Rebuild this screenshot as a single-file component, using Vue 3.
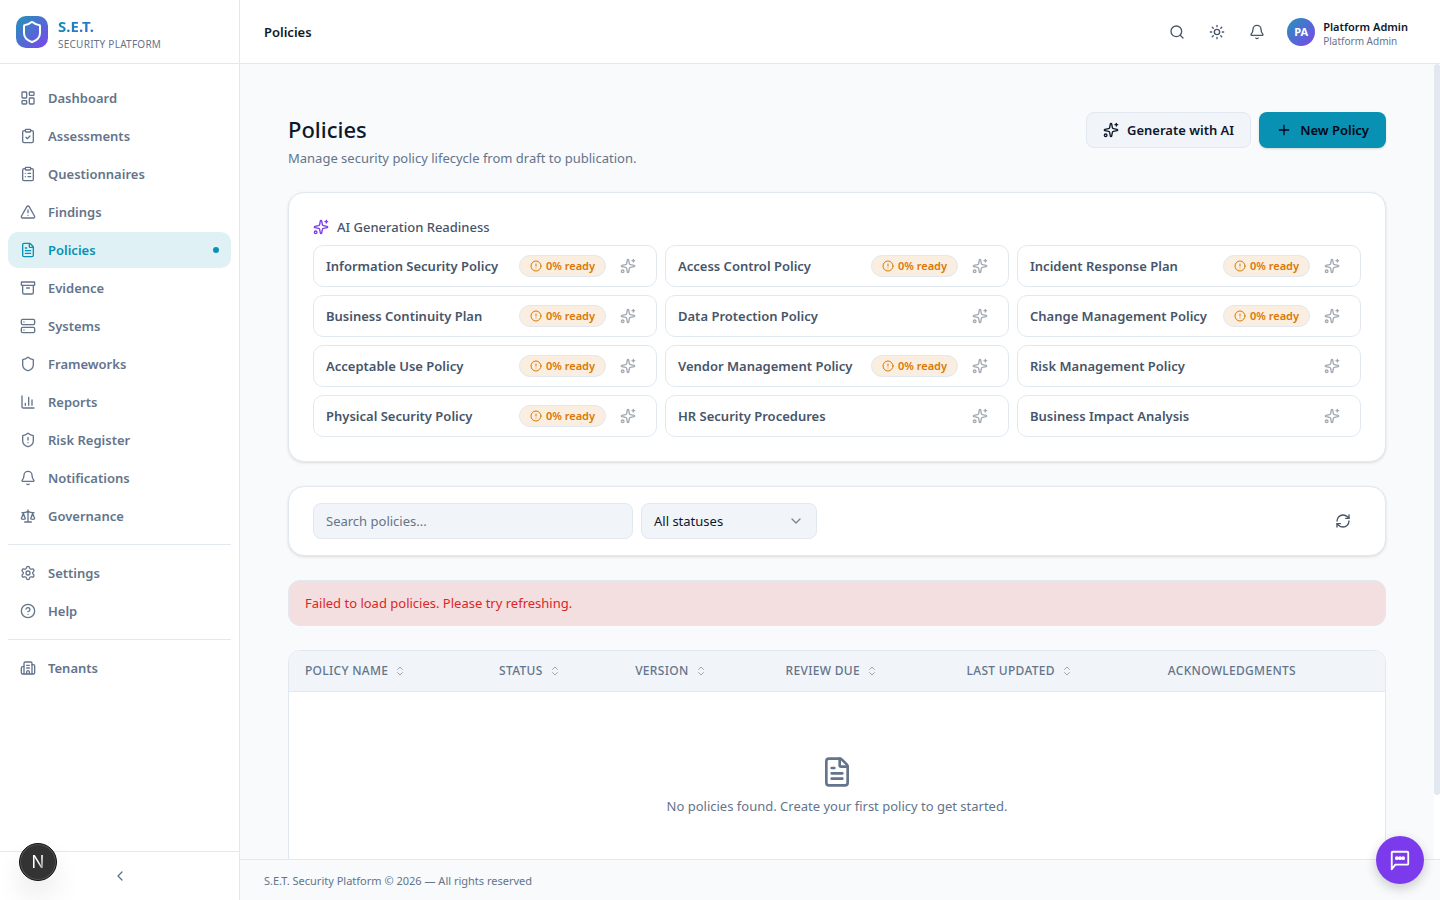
<script setup>
import { ref, onMounted, onBeforeUnmount } from "vue";

const icons = {
  dashboard:
    '<rect width="7" height="9" x="3" y="3" rx="1"/><rect width="7" height="5" x="14" y="3" rx="1"/><rect width="7" height="9" x="14" y="12" rx="1"/><rect width="7" height="5" x="3" y="16" rx="1"/>',
  clipboardCheck:
    '<rect width="8" height="4" x="8" y="2" rx="1"/><path d="M16 4h2a2 2 0 0 1 2 2v14a2 2 0 0 1-2 2H6a2 2 0 0 1-2-2V6a2 2 0 0 1 2-2h2"/><path d="m9 14 2 2 4-4"/>',
  clipboardList:
    '<rect width="8" height="4" x="8" y="2" rx="1"/><path d="M16 4h2a2 2 0 0 1 2 2v14a2 2 0 0 1-2 2H6a2 2 0 0 1-2-2V6a2 2 0 0 1 2-2h2"/><path d="M12 11h4M12 16h4M8 11h.01M8 16h.01"/>',
  triangle:
    '<path d="m21.73 18-8-14a2 2 0 0 0-3.48 0l-8 14A2 2 0 0 0 4 21h16a2 2 0 0 0 1.73-3"/><path d="M12 9v4M12 17h.01"/>',
  file:
    '<path d="M6 22a2 2 0 0 1-2-2V4a2 2 0 0 1 2-2h8a2.4 2.4 0 0 1 1.704.706l3.588 3.588A2.4 2.4 0 0 1 20 8v12a2 2 0 0 1-2 2z"/><path d="M14 2v5a1 1 0 0 0 1 1h5M10 9H8M16 13H8M16 17H8"/>',
  archive:
    '<rect width="20" height="5" x="2" y="3" rx="1"/><path d="M4 8v11a2 2 0 0 0 2 2h12a2 2 0 0 0 2-2V8M10 12h4"/>',
  server:
    '<rect width="20" height="8" x="2" y="2" rx="2"/><rect width="20" height="8" x="2" y="14" rx="2"/><path d="M6 6h.01M6 18h.01"/>',
  shield:
    '<path d="M20 13c0 5-3.5 7.5-7.66 8.95a1 1 0 0 1-.67-.01C7.5 20.5 4 18 4 13V6a1 1 0 0 1 1-1c2 0 4.5-1.2 6.24-2.72a1.17 1.17 0 0 1 1.52 0C14.51 3.81 17 5 19 5a1 1 0 0 1 1 1z"/>',
  chart: '<path d="M3 3v16a2 2 0 0 0 2 2h16M18 17V9M13 17V5M8 17v-3"/>',
  shieldAlert:
    '<path d="M20 13c0 5-3.5 7.5-7.66 8.95a1 1 0 0 1-.67-.01C7.5 20.5 4 18 4 13V6a1 1 0 0 1 1-1c2 0 4.5-1.2 6.24-2.72a1.17 1.17 0 0 1 1.52 0C14.51 3.81 17 5 19 5a1 1 0 0 1 1 1z"/><path d="M12 8v4M12 16h.01"/>',
  bell:
    '<path d="M10.268 21a2 2 0 0 0 3.464 0"/><path d="M3.262 15.326A1 1 0 0 0 4 17h16a1 1 0 0 0 .74-1.673C19.41 13.956 18 12.499 18 8A6 6 0 0 0 6 8c0 4.499-1.411 5.956-2.738 7.326"/>',
  scale:
    '<path d="m16 16 3-8 3 8c-.87.65-1.92 1-3 1s-2.13-.35-3-1Z"/><path d="m2 16 3-8 3 8c-.87.65-1.92 1-3 1s-2.13-.35-3-1Z"/><path d="M7 21h10M12 3v18M3 7h2c2 0 5-1 7-2 2 1 5 2 7 2h2"/>',
  settings:
    '<path d="M9.671 4.136a2.34 2.34 0 0 1 4.659 0 2.34 2.34 0 0 0 3.319 1.915 2.34 2.34 0 0 1 2.33 4.033 2.34 2.34 0 0 0 0 3.831 2.34 2.34 0 0 1-2.33 4.033 2.34 2.34 0 0 0-3.319 1.915 2.34 2.34 0 0 1-4.659 0 2.34 2.34 0 0 0-3.32-1.915 2.34 2.34 0 0 1-2.33-4.033 2.34 2.34 0 0 0 0-3.831A2.34 2.34 0 0 1 6.35 6.051a2.34 2.34 0 0 0 3.319-1.915"/><circle cx="12" cy="12" r="3"/>',
  help:
    '<circle cx="12" cy="12" r="10"/><path d="M9.09 9a3 3 0 0 1 5.83 1c0 2-3 3-3 3M12 17h.01"/>',
  building:
    '<path d="M10 12h4M10 8h4M14 21v-3a2 2 0 0 0-4 0v3"/><path d="M6 10H4a2 2 0 0 0-2 2v7a2 2 0 0 0 2 2h16a2 2 0 0 0 2-2V9a2 2 0 0 0-2-2h-2"/><path d="M6 21V5a2 2 0 0 1 2-2h8a2 2 0 0 1 2 2v16"/>',
  chevronLeft: '<path d="m15 18-6-6 6-6"/>',
  chevronDown: '<path d="m6 9 6 6 6-6"/>',
  sort: '<path d="m7 15 5 5 5-5M7 9l5-5 5 5"/>',
  search: '<path d="m21 21-4.34-4.34"/><circle cx="11" cy="11" r="8"/>',
  sun:
    '<circle cx="12" cy="12" r="4"/><path d="M12 2v2M12 20v2m-7.07-17.07 1.41 1.41m11.32 11.32 1.41 1.41M2 12h2M20 12h2M6.34 17.66l-1.41 1.41M19.07 4.93l-1.41 1.41"/>',
  plus: '<path d="M5 12h14M12 5v14"/>',
  sparkles:
    '<path d="M11.017 2.814a1 1 0 0 1 1.966 0l1.051 5.558a2 2 0 0 0 1.594 1.594l5.558 1.051a1 1 0 0 1 0 1.966l-5.558 1.051a2 2 0 0 0-1.594 1.594l-1.051 5.558a1 1 0 0 1-1.966 0l-1.051-5.558a2 2 0 0 0-1.594-1.594l-5.558-1.051a1 1 0 0 1 0-1.966l5.558-1.051a2 2 0 0 0 1.594-1.594z"/><path d="M20 2v4M22 4h-4"/><circle cx="4" cy="20" r="2"/>',
  alert: '<circle cx="12" cy="12" r="10"/><path d="M12 8v4M12 16h.01"/>',
  refresh:
    '<path d="M3 12a9 9 0 0 1 9-9 9.75 9.75 0 0 1 6.74 2.74L21 8"/><path d="M21 3v5h-5M21 12a9 9 0 0 1-9 9 9.75 9.75 0 0 1-6.74-2.74L3 16"/><path d="M8 16H3v5"/>',
  chat:
    '<path d="M3 22V4a1 1 0 0 1 1-1h16a1 1 0 0 1 1 1v12a1 1 0 0 1-1 1H7z"/><path stroke-width="4" d="M8.5 10h.01M12 10h.01M15.5 10h.01"/>',
};

const navGroups = [
  [
    { label: "Dashboard", icon: "dashboard" },
    { label: "Assessments", icon: "clipboardCheck" },
    { label: "Questionnaires", icon: "clipboardList" },
    { label: "Findings", icon: "triangle" },
    { label: "Policies", icon: "file" },
    { label: "Evidence", icon: "archive" },
    { label: "Systems", icon: "server" },
    { label: "Frameworks", icon: "shield" },
    { label: "Reports", icon: "chart" },
    { label: "Risk Register", icon: "shieldAlert" },
    { label: "Notifications", icon: "bell" },
    { label: "Governance", icon: "scale" },
  ],
  [
    { label: "Settings", icon: "settings" },
    { label: "Help", icon: "help" },
  ],
  [{ label: "Tenants", icon: "building" }],
];

const readiness = [
  { name: "Information Security Policy", percent: 0 },
  { name: "Access Control Policy", percent: 0 },
  { name: "Incident Response Plan", percent: 0 },
  { name: "Business Continuity Plan", percent: 0 },
  { name: "Data Protection Policy" },
  { name: "Change Management Policy", percent: 0 },
  { name: "Acceptable Use Policy", percent: 0 },
  { name: "Vendor Management Policy", percent: 0 },
  { name: "Risk Management Policy" },
  { name: "Physical Security Policy", percent: 0 },
  { name: "HR Security Procedures" },
  { name: "Business Impact Analysis" },
];

const columns = [
  { label: "Policy Name", sortable: true },
  { label: "Status", sortable: true },
  { label: "Version", sortable: true },
  { label: "Review Due", sortable: true },
  { label: "Last Updated", sortable: true },
  { label: "Acknowledgments", sortable: false },
];

const current = ref("Policies");
const search = ref("");
const status = ref("all");

// slim scrollbar beside the content
const content = ref(null);
const thumb = ref({ top: "0%", height: "0%" });

function updateThumb() {
  const el = content.value;
  const visible = el.clientHeight / el.scrollHeight;
  thumb.value = {
    top: `${(el.scrollTop / el.scrollHeight) * 100}%`,
    height: visible < 1 ? `${visible * 100}%` : "0%",
  };
}

onMounted(() => {
  updateThumb();
  window.addEventListener("resize", updateThumb);
});
onBeforeUnmount(() => window.removeEventListener("resize", updateThumb));
</script>

<template>
  <div class="app">
    <aside class="sidebar">
      <div class="brand">
        <span class="brand-logo">
          <svg class="icon icon-lg" viewBox="0 0 24 24" v-html="icons.shield"></svg>
        </span>
        <div class="brand-text">
          <div class="brand-name">S.E.T.</div>
          <div class="brand-sub">Security Platform</div>
        </div>
      </div>
      <nav class="nav">
        <ul v-for="(group, i) in navGroups" :key="i" class="nav-group">
          <li v-for="item in group" :key="item.label">
            <a
              href="#"
              class="nav-link"
              :class="{ active: item.label === current }"
              @click.prevent="current = item.label"
            >
              <svg class="icon" viewBox="0 0 24 24" v-html="icons[item.icon]"></svg>
              <span>{{ item.label }}</span>
              <span v-if="item.label === current" class="nav-dot"></span>
            </a>
          </li>
        </ul>
      </nav>
      <div class="sidebar-foot">
        <button class="collapse" aria-label="Collapse sidebar">
          <svg class="icon" viewBox="0 0 24 24" v-html="icons.chevronLeft"></svg>
        </button>
      </div>
    </aside>

    <div class="page">
      <header class="topbar">
        <span class="topbar-title">Policies</span>
        <div class="topbar-actions">
          <button class="icon-btn" aria-label="Search">
            <svg class="icon" viewBox="0 0 24 24" v-html="icons.search"></svg>
          </button>
          <button class="icon-btn" aria-label="Toggle theme">
            <svg class="icon" viewBox="0 0 24 24" v-html="icons.sun"></svg>
          </button>
          <button class="icon-btn" aria-label="Notifications">
            <svg class="icon" viewBox="0 0 24 24" v-html="icons.bell"></svg>
          </button>
          <button class="user">
            <span class="avatar">PA</span>
            <span class="user-text">
              <span class="user-name">Platform Admin</span>
              <span class="user-role">Platform Admin</span>
            </span>
          </button>
        </div>
      </header>

      <div class="scroll-area">
        <main ref="content" class="content" @scroll="updateThumb">
          <div class="page-head">
            <div>
              <h1>Policies</h1>
              <p>Manage security policy lifecycle from draft to publication.</p>
            </div>
            <div class="page-actions">
              <button class="btn btn-secondary">
                <svg class="icon" viewBox="0 0 24 24" v-html="icons.sparkles"></svg>
                Generate with AI
              </button>
              <button class="btn btn-primary">
                <svg class="icon" viewBox="0 0 24 24" v-html="icons.plus"></svg>
                New Policy
              </button>
            </div>
          </div>

          <section class="card readiness">
            <h2>
              <svg class="icon" viewBox="0 0 24 24" v-html="icons.sparkles"></svg>
              AI Generation Readiness
            </h2>
            <div class="readiness-grid">
              <div v-for="item in readiness" :key="item.name" class="readiness-item">
                <span class="readiness-name">{{ item.name }}</span>
                <span v-if="item.percent !== undefined" class="badge">
                  <svg class="icon icon-sm" viewBox="0 0 24 24" v-html="icons.alert"></svg>
                  {{ item.percent }}% ready
                </span>
                <button class="generate" :aria-label="`Generate ${item.name}`">
                  <svg class="icon" viewBox="0 0 24 24" v-html="icons.sparkles"></svg>
                </button>
              </div>
            </div>
          </section>

          <section class="card filters">
            <input
              v-model="search"
              type="text"
              class="field search"
              placeholder="Search policies..."
              aria-label="Search policies"
            />
            <div class="select-wrap">
              <select v-model="status" class="field" aria-label="Status">
                <option value="all">All statuses</option>
                <option value="draft">Draft</option>
                <option value="published">Published</option>
              </select>
              <svg class="icon" viewBox="0 0 24 24" v-html="icons.chevronDown"></svg>
            </div>
            <button class="icon-btn refresh" aria-label="Refresh">
              <svg class="icon" viewBox="0 0 24 24" v-html="icons.refresh"></svg>
            </button>
          </section>

          <div class="error" role="alert">Failed to load policies. Please try refreshing.</div>

          <div class="table-wrap">
            <table>
              <thead>
                <tr>
                  <th v-for="col in columns" :key="col.label" scope="col">
                    <button v-if="col.sortable" class="sort">
                      {{ col.label }}
                      <svg class="icon icon-sm" viewBox="0 0 24 24" v-html="icons.sort"></svg>
                    </button>
                    <template v-else>{{ col.label }}</template>
                  </th>
                </tr>
              </thead>
              <tbody>
                <tr>
                  <td :colspan="columns.length">
                    <div class="empty">
                      <svg class="icon icon-xl" viewBox="0 0 24 24" v-html="icons.file"></svg>
                      <p>No policies found. Create your first policy to get started.</p>
                    </div>
                  </td>
                </tr>
              </tbody>
            </table>
          </div>
        </main>
        <div class="scroll-track">
          <div class="scroll-thumb" :style="thumb"></div>
        </div>
      </div>

      <footer class="footer">S.E.T. Security Platform © 2026 — All rights reserved</footer>
    </div>

    <button class="dev-badge" aria-label="Open dev tools"><span>N</span></button>
    <button class="chat" aria-label="Open chat">
      <svg class="icon" viewBox="0 0 24 24" v-html="icons.chat"></svg>
    </button>
  </div>
</template>

<style>
body {
  margin: 0;
}
</style>

<style scoped>
* {
  box-sizing: border-box;
}

.app {
  display: flex;
  height: 100vh;
  background: #f8fafc;
  color: #0f172a;
  font-family: "Segoe UI", "Noto Sans", "Open Sans", sans-serif;
  font-size: 13px;
  line-height: 20px;
}

button,
input,
select {
  font: inherit;
  color: inherit;
}

button {
  padding: 0;
  border: none;
  background: none;
  cursor: pointer;
}

h1,
h2,
p,
ul {
  margin: 0;
  padding: 0;
}

.icon {
  flex-shrink: 0;
  width: 16px;
  height: 16px;
  fill: none;
  stroke: currentColor;
  stroke-width: 2;
  stroke-linecap: round;
  stroke-linejoin: round;
}

.icon-sm {
  width: 12px;
  height: 12px;
}

.icon-lg {
  width: 24px;
  height: 24px;
}

.icon-xl {
  width: 32px;
  height: 32px;
}

/* sidebar */
.sidebar {
  display: flex;
  flex-direction: column;
  flex-shrink: 0;
  width: 240px;
  background: #fff;
  border-right: 1px solid #e2e8f0;
}

.brand {
  display: flex;
  align-items: center;
  gap: 10px;
  height: 64px;
  padding: 0 16px;
  border-bottom: 1px solid #e2e8f0;
}

.brand-logo {
  display: flex;
  align-items: center;
  justify-content: center;
  width: 32px;
  height: 32px;
  border-radius: 10px;
  color: #fff;
  background: linear-gradient(135deg, #2394b8, #7c45ed);
}

.brand-text {
  padding-top: 4px;
}

.brand-name {
  font-size: 15px;
  font-weight: 700;
  line-height: 20px;
  color: transparent;
  background: linear-gradient(135deg, #0891b2, #7c3aed);
  background-clip: text;
}

.brand-sub {
  font-size: 10px;
  line-height: 16px;
  letter-spacing: 0.025em;
  text-transform: uppercase;
  color: #64748b;
}

.nav {
  flex: 1;
  padding: 16px 8px;
}

.nav-group {
  display: flex;
  flex-direction: column;
  gap: 2px;
  list-style: none;
}

.nav-group + .nav-group {
  margin-top: 10px;
  padding-top: 10px;
  border-top: 1px solid #e2e8f0;
}

.nav-link {
  display: flex;
  align-items: center;
  gap: 12px;
  height: 36px;
  padding: 0 12px;
  border-radius: 10px;
  color: #64748b;
  font-weight: 600;
  text-decoration: none;
}

.nav-link.active {
  color: #0891b2;
  background: #dff1f5;
}

.nav-dot {
  width: 6px;
  height: 6px;
  margin-left: auto;
  border-radius: 50%;
  background: #0891b2;
}

.sidebar-foot {
  padding: 8px;
  border-top: 1px solid #e2e8f0;
}

.collapse {
  display: flex;
  align-items: center;
  justify-content: center;
  width: 100%;
  height: 32px;
  color: #64748b;
}

/* top bar */
.page {
  display: flex;
  flex: 1;
  flex-direction: column;
  min-width: 0;
}

.topbar {
  display: flex;
  flex-shrink: 0;
  align-items: center;
  justify-content: space-between;
  height: 64px;
  padding: 0 24px;
  background: #fff;
  border-bottom: 1px solid #e2e8f0;
}

.topbar-title {
  font-weight: 600;
}

.topbar-actions {
  display: flex;
  align-items: center;
  gap: 4px;
}

.icon-btn {
  display: flex;
  align-items: center;
  justify-content: center;
  width: 36px;
  height: 36px;
  color: #475569;
}

.user {
  display: flex;
  align-items: center;
  gap: 8px;
  padding: 0 8px;
  text-align: left;
}

.avatar {
  display: flex;
  align-items: center;
  justify-content: center;
  width: 28px;
  height: 28px;
  border-radius: 50%;
  color: #fff;
  font-size: 11px;
  font-weight: 700;
  background: linear-gradient(135deg, #2394b8, #7c45ed);
}

.user-text {
  display: flex;
  flex-direction: column;
  padding-top: 4px;
}

.user-name {
  font-size: 11px;
  font-weight: 600;
  line-height: 16px;
}

.user-role {
  font-size: 10px;
  line-height: 13px;
  color: #64748b;
}

/* content */
.scroll-area {
  display: flex;
  flex: 1;
  min-height: 0;
}

.content {
  display: flex;
  flex: 1;
  flex-direction: column;
  gap: 24px;
  min-width: 0;
  padding: 48px;
  overflow-y: auto;
  scrollbar-width: none;
}

.scroll-track {
  position: relative;
  width: 6px;
  background: #fff;
}

.scroll-thumb {
  position: absolute;
  width: 100%;
  border-radius: 3px;
  background: #e2e8f0;
}

.content > * {
  flex-shrink: 0;
}

.page-head {
  display: flex;
  align-items: flex-start;
  justify-content: space-between;
}

.page-head h1 {
  font-size: 22px;
  font-weight: 500;
  line-height: 34px;
}

.page-head p {
  padding-top: 2px;
  color: #64748b;
}

.page-actions {
  display: flex;
  gap: 8px;
}

.btn {
  display: flex;
  align-items: center;
  gap: 8px;
  height: 36px;
  padding: 0 16px;
  border: 1px solid transparent;
  border-radius: 8px;
  font-weight: 600;
}

.btn-secondary {
  background: #f1f5f9;
  border-color: #e2e8f0;
}

.btn-primary {
  color: #020617;
  background: #0891b2;
  box-shadow: 0 1px 2px rgba(0, 0, 0, 0.15);
}

.card {
  background: #fff;
  border: 1px solid #e2e8f0;
  border-radius: 16px;
  box-shadow: 0 1px 3px rgba(0, 0, 0, 0.12);
}

.readiness {
  padding: 24px;
}

.readiness h2 {
  display: flex;
  align-items: center;
  gap: 8px;
  margin-bottom: 8px;
  color: #475569;
  font-size: 13px;
  font-weight: 500;
  line-height: 20px;
}

.readiness h2 .icon {
  color: #7c3aed;
}

.readiness-grid {
  display: grid;
  grid-template-columns: repeat(3, 1fr);
  gap: 8px;
}

.readiness-item {
  display: flex;
  align-items: center;
  gap: 8px;
  height: 42px;
  padding: 0 14px 0 12px;
  border: 1px solid #e2e8f0;
  border-radius: 10px;
}

.readiness-name {
  flex: 1;
  overflow: hidden;
  color: #475569;
  font-weight: 600;
  text-overflow: ellipsis;
  white-space: nowrap;
}

.badge {
  display: flex;
  align-items: center;
  gap: 4px;
  height: 22px;
  padding: 0 10px;
  border: 1px solid #e2e8f0;
  border-radius: 11px;
  color: #d97706;
  background: #faeee0;
  font-size: 11px;
  font-weight: 600;
  white-space: nowrap;
}

.generate {
  display: flex;
  align-items: center;
  justify-content: center;
  width: 28px;
  height: 28px;
  color: #475569;
  opacity: 0.5;
}

.filters {
  display: flex;
  align-items: center;
  gap: 8px;
  padding: 16px 24px;
}

.field {
  width: 100%;
  height: 36px;
  padding: 0 12px;
  border: 1px solid #e2e8f0;
  border-radius: 8px;
  background: #f1f5f9;
}

.search {
  max-width: 320px;
}

.search::placeholder {
  color: #64748b;
}

.select-wrap {
  position: relative;
  width: 176px;
}

.select-wrap select {
  appearance: none;
}

.select-wrap .icon {
  position: absolute;
  top: 10px;
  right: 13px;
  color: #0f172a;
  opacity: 0.5;
  pointer-events: none;
}

.refresh {
  margin-left: auto;
}

.error {
  padding: 12px 16px;
  border: 1px solid #e2e8f0;
  border-radius: 12px;
  color: #dc2626;
  background: #f4dfe0;
}

.table-wrap {
  overflow: hidden;
  background: #fff;
  border: 1px solid #e2e8f0;
  border-radius: 12px;
}

table {
  width: 100%;
  border-collapse: collapse;
}

th {
  height: 40px;
  padding: 0 16px;
  border-bottom: 1px solid #e2e8f0;
  color: #64748b;
  background: #f1f5f9;
  font-size: 12px;
  font-weight: 500;
  letter-spacing: 0.025em;
  line-height: 16px;
  text-align: left;
  text-transform: uppercase;
  white-space: nowrap;
}

.sort {
  display: flex;
  align-items: center;
  gap: 6px;
  letter-spacing: inherit;
  text-transform: inherit;
}

.sort .icon {
  opacity: 0.6;
}

td {
  padding: 0;
}

.empty {
  display: flex;
  flex-direction: column;
  align-items: center;
  gap: 8px;
  padding: 64px 16px;
  color: #64748b;
}

.footer {
  flex-shrink: 0;
  padding: 12px 24px 11px;
  border-top: 1px solid #e2e8f0;
  color: #64748b;
  font-size: 11px;
  line-height: 17px;
}

/* floating buttons */
.dev-badge,
.chat {
  position: fixed;
  display: flex;
  align-items: center;
  justify-content: center;
  border-radius: 50%;
  color: #fff;
}

.dev-badge {
  bottom: 19px;
  left: 19px;
  width: 38px;
  height: 38px;
  border: 1px solid #111;
  background: #333;
  box-shadow: inset 0 0 0 1px #555, 0 16px 32px -8px rgba(0, 0, 0, 0.24);
  font-family: Inter, sans-serif;
  font-size: 17px;
}

.dev-badge span {
  color: transparent;
  background: linear-gradient(to bottom right, #fff 55%, #666);
  background-clip: text;
}

.chat {
  right: 16px;
  bottom: 16px;
  width: 48px;
  height: 48px;
  background: #7c3aed;
  box-shadow: 0 4px 12px rgba(0, 0, 0, 0.2);
}

.chat .icon {
  width: 22px;
  height: 22px;
}
</style>
